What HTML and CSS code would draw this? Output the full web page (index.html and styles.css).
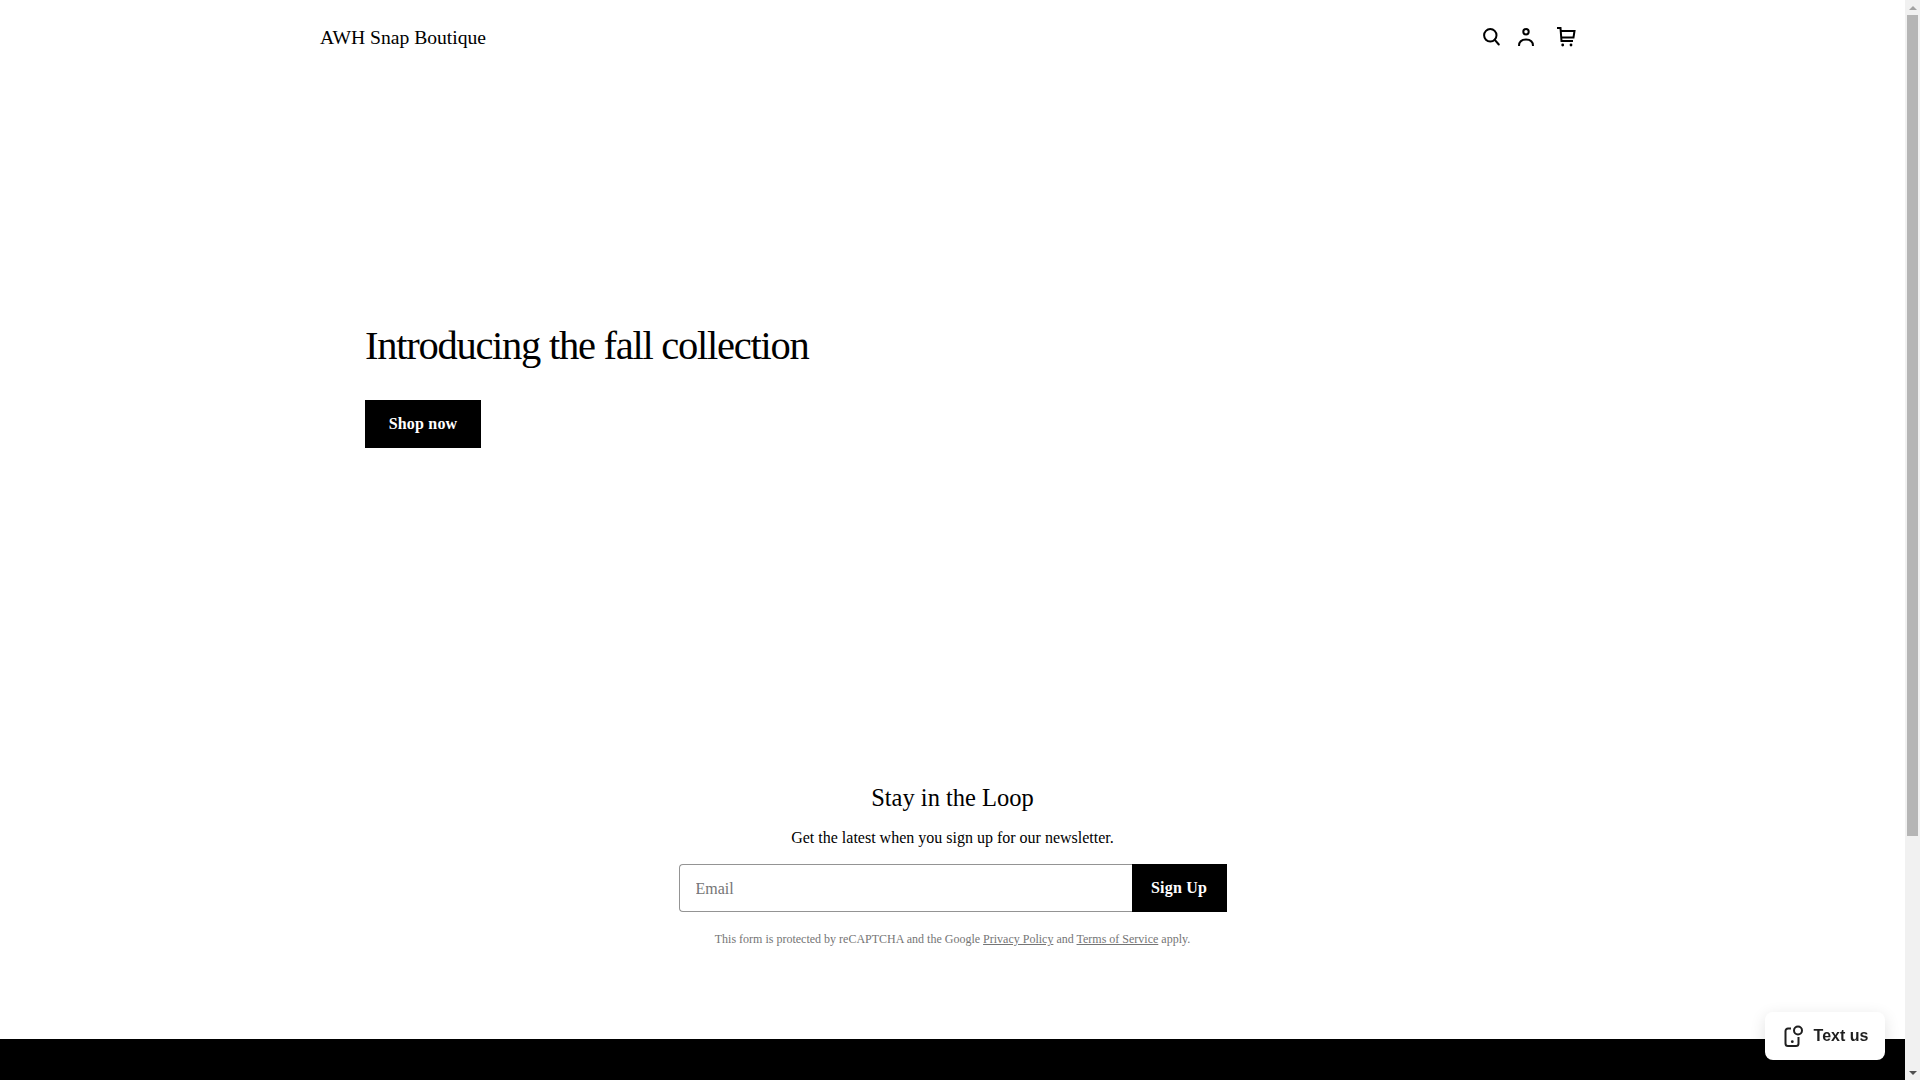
FILE: index.html
```html
<!DOCTYPE html>
<html lang="en">
<head>
    <meta charset="UTF-8">
    <meta name="viewport" content="width=device-width, initial-scale=1.0">
    <title>AWH Snap Boutique</title>
    <link rel="stylesheet" href="styles.css">
</head>
<body>
    <header class="site-header">
        <a class="brand" href="#">AWH Snap Boutique</a>
        <div class="header-icons">
            <a class="icon-link" href="#" aria-label="Search">
                <svg width="20" height="20" viewBox="0 0 20 20" fill="none" stroke="#000" stroke-width="2">
                    <circle cx="9.300" cy="8.300" r="6.200"/>
                    <path d="M13.800 12.800 L17.800 17.500" stroke-linecap="round"/>
                </svg>
            </a>
            <a class="icon-link" href="#" aria-label="Account">
                <svg width="20" height="20" viewBox="0 0 20 20" fill="none" stroke="#000" stroke-width="2">
                    <circle cx="10" cy="4.700" r="2.700"/>
                    <path d="M3 19 C3 14 6 12.500 10 12.500 C14 12.500 17 14 17 19"/>
                </svg>
            </a>
            <a class="icon-link cart-link" href="#" aria-label="Cart">
                <svg width="20" height="20" viewBox="0 0 20 20" fill="none" stroke="#000" stroke-width="2">
                    <path d="M1 1 H4.500 L5.500 14 H17"/>
                    <path d="M5 4 H18.500 L17.500 10.500 H5.500"/>
                    <circle cx="6.700" cy="18" r="1.400" fill="#000" stroke="none"/>
                    <circle cx="15" cy="18" r="1.400" fill="#000" stroke="none"/>
                </svg>
            </a>
        </div>
    </header>

    <section class="hero">
        <h1>Introducing the fall collection</h1>
        <a class="btn hero-btn" href="#">Shop now</a>
    </section>

    <section class="newsletter">
        <h2>Stay in the Loop</h2>
        <p class="newsletter-text">Get the latest when you sign up for our newsletter.</p>
        <form class="signup">
            <input class="signup-input" type="email" placeholder="Email">
            <button class="btn signup-btn" type="button">Sign Up</button>
        </form>
        <p class="legal">This form is protected by reCAPTCHA and the Google <a href="#">Privacy Policy</a> and <a href="#">Terms of Service</a> apply.</p>
    </section>

    <footer class="site-footer"></footer>

    <button class="text-us" type="button">
        <svg width="24" height="24" viewBox="0 0 24 24" fill="none" stroke="#1f1f1f" stroke-width="2">
            <path d="M9 4.500 H6 A2.500 2.500 0 0 0 3.500 7 V19.500 A2.500 2.500 0 0 0 6 22 H14 A2.500 2.500 0 0 0 16.500 19.500 V13"/>
            <circle cx="16" cy="6.500" r="4"/>
            <circle cx="10.300" cy="17.700" r="1.400" fill="#1f1f1f" stroke="none"/>
        </svg>
        <span>Text us</span>
    </button>

    <div class="scrollbar">
        <div class="scroll-btn"><span class="arrow-up"></span></div>
        <div class="scroll-track"><div class="scroll-thumb"></div></div>
        <div class="scroll-btn"><span class="arrow-down"></span></div>
    </div>
</body>
</html>
```

FILE: styles.css
```css
body {
    margin: 0 15px 0 0;
    font-family: "Liberation Serif", "Times New Roman", serif;
    color: #000;
    background: #fff;
}
a {
    color: inherit;
    text-decoration: none;
}
.site-header {
    max-width: 1280px;
    margin: 0 auto;
    height: 74px;
    padding: 0 16.5px 0 7.5px;
    box-sizing: border-box;
    display: flex;
    align-items: center;
    justify-content: space-between;
}
.brand {
    font-size: 19.6px;
    padding-top: 2px;
}
.header-icons {
    display: flex;
    align-items: center;
    gap: 15px;
}
.icon-link {
    display: flex;
    width: 20px;
    height: 20px;
}
.cart-link {
    margin-left: 5px;
}
.hero {
    max-width: 1175px;
    margin: 0 auto;
    height: 629px;
    padding-top: 248px;
    box-sizing: border-box;
}
.hero h1 {
    margin: 0 0 30px;
    font-size: 40.5px;
    font-weight: 400;
    line-height: 48px;
    letter-spacing: -1.26px;
}
.btn {
    background: #000;
    color: #fff;
    border: none;
    font-family: inherit;
    font-size: 16px;
    font-weight: 700;
    letter-spacing: 0.2px;
    height: 48px;
    display: inline-flex;
    align-items: center;
    justify-content: center;
    box-sizing: border-box;
}
.hero-btn {
    width: 116px;
}
.newsletter {
    text-align: center;
    height: 336px;
    padding-top: 79px;
    box-sizing: border-box;
}
.newsletter h2 {
    margin: 0;
    font-size: 24.5px;
    font-weight: 400;
    line-height: 32px;
}
.newsletter-text {
    margin: 12px 0 0;
    font-size: 16px;
    line-height: 24px;
}
.signup {
    display: flex;
    width: 548px;
    margin: 14px auto 0;
}
.signup-input {
    flex: 1;
    min-width: 0;
    height: 48px;
    box-sizing: border-box;
    border: 1px solid #949494;
    border-right: none;
    border-radius: 4px 0 0 4px;
    padding: 2px 16px 0;
    font-family: inherit;
    font-size: 16px;
    outline: none;
}
.signup-input::placeholder {
    color: #757575;
}
.signup-btn {
    width: 95px;
    padding-top: 1px;
}
.legal {
    margin: 19px 0 0;
    font-size: 12px;
    line-height: 16px;
    color: #757575;
}
.legal a {
    text-decoration: underline;
}
.site-footer {
    background: #000;
    height: 344px;
}
.text-us {
    position: fixed;
    right: 35px;
    bottom: 20px;
    width: 120px;
    height: 48px;
    display: flex;
    align-items: center;
    justify-content: center;
    gap: 8px;
    padding: 0;
    background: #fff;
    border: none;
    border-radius: 8px;
    box-shadow: 0 4px 16px rgba(0,0,0,0.12);
    font-family: "Liberation Sans", Arial, sans-serif;
    font-size: 16px;
    font-weight: 700;
    color: #1f1f1f;
}
.scrollbar {
    position: fixed;
    top: 0;
    right: 0;
    bottom: 0;
    width: 15px;
    background: #f1f1f1;
    display: flex;
    flex-direction: column;
}
.scroll-btn {
    height: 15px;
    display: flex;
    align-items: center;
    justify-content: center;
}
.arrow-up {
    border-left: 4.5px solid transparent;
    border-right: 4.5px solid transparent;
    border-bottom: 4.5px solid #a3a3a3;
}
.arrow-down {
    border-left: 4.5px solid transparent;
    border-right: 4.5px solid transparent;
    border-top: 4.5px solid #505050;
}
.scroll-track {
    flex: 1;
    padding: 0 2px;
}
.scroll-thumb {
    height: 821px;
    background: #b5b5b5;
}
```
